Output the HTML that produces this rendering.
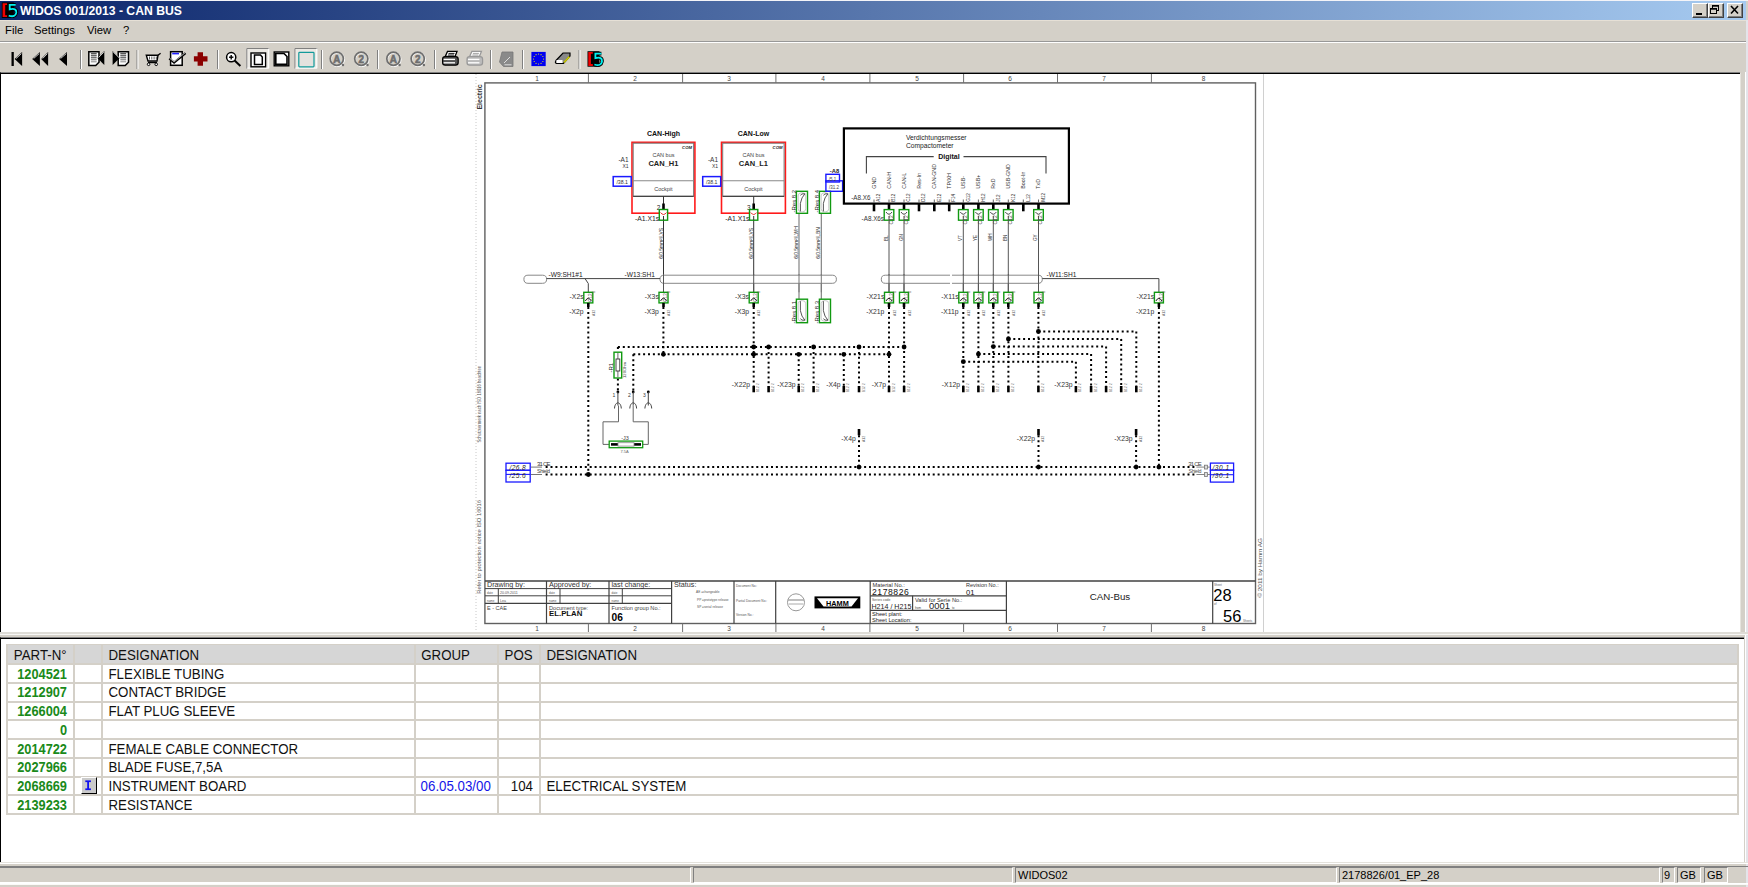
<!DOCTYPE html>
<html><head><meta charset="utf-8">
<style>
*{margin:0;padding:0;box-sizing:border-box}
html,body{width:1748px;height:887px;overflow:hidden;background:#d4d0c8;font-family:"Liberation Sans",sans-serif;position:relative}
.abs{position:absolute}
#title{left:0;top:1px;width:1746px;height:19px;background:linear-gradient(to right,#0a246a,#a6caf0)}
#topline{left:0;top:0;width:1748px;height:1px;background:#f4f4f8}
#ttext{left:20px;top:3.8px;color:#fff;font-weight:bold;font-size:12.2px;white-space:nowrap}
.wbtn{top:3px;height:15px;width:16px;background:#d4d0c8;border-top:1px solid #fff;border-left:1px solid #fff;border-right:1px solid #404040;border-bottom:1px solid #404040;box-shadow:inset -1px -1px 0 #808080}
#menu span{position:absolute;top:24px;font-size:11.3px;color:#000;white-space:nowrap}
#drawpanel{left:0;top:72px;width:1740px;height:560px;background:#fff;border-top:1px solid #808080;border-left:1px solid #000}
#drawpanel:before{content:"";position:absolute;left:0;top:0;right:0;height:1px;background:#000}
#tablepanel{left:0;top:637px;width:1744px;height:226px;background:#fff;border-top:1px solid #808080;border-left:1px solid #000}
#tablepanel:before{content:"";position:absolute;left:0;top:0;right:0;height:1px;background:#000}
.sp{position:absolute;top:867px;height:16px;border-top:1px solid #808080;border-left:1px solid #808080;border-bottom:1px solid #fff;border-right:1px solid #fff;font-size:11px;line-height:14px;padding-left:2px;white-space:nowrap;color:#000}
.hl{position:absolute;height:2px;background:#d4d0c8}
.vl{position:absolute;width:2px;background:#d4d0c8}
.tx{position:absolute;font-size:13.3px;line-height:16px;white-space:nowrap;color:#111;transform:translateY(0.6px) scaleY(1.17);transform-origin:0 55%}
.pn{position:absolute;font-size:12.8px;line-height:16px;white-space:nowrap;color:#1a8a1a;font-weight:bold;text-align:right;width:60px;left:7px;transform:translateY(0.7px) scaleY(1.18);transform-origin:0 55%}
svg text{font-family:"Liberation Sans",sans-serif}
.d{stroke:#000;stroke-width:2;stroke-dasharray:2 2.9}
</style></head><body>
<div id="topline" class="abs"></div>
<div id="title" class="abs"></div>
<div id="ttext" class="abs">WIDOS 001/2013 - CAN BUS</div>
<svg class="abs" style="left:0;top:0" width="20" height="20"><path d="M1.8,2.4 H13.8 V17.9 H1.8 Z" fill="#000"/>
<path d="M2.6,3.2 H7.1 V5 H5.2 V15.2 H7.1 V17.1 H2.6 Z" fill="#f00000"/>
<path d="M15.7,4.8 H9.7 V9.4 Q16.8,7.6 16.3,12.7 Q15.5,17.7 8.7,15.7" fill="none" stroke="#000" stroke-width="3.6"/>
<path d="M15.7,4.8 H9.7 V9.4 Q16.8,7.6 16.3,12.7 Q15.5,17.7 8.7,15.7" fill="none" stroke="#00f0f0" stroke-width="1.8"/></svg>
<div class="abs wbtn" style="left:1692px"></div>
<div class="abs wbtn" style="left:1708px"></div>
<div class="abs wbtn" style="left:1727px"></div>
<svg class="abs" style="left:1692px;top:3px" width="52" height="15">
<rect x="4" y="10" width="6" height="2" fill="#000"/>
<rect x="20.5" y="2.5" width="6" height="5" fill="none" stroke="#000" stroke-width="1"/><rect x="20.5" y="2.5" width="6" height="1.2" fill="#000"/>
<rect x="18.5" y="5.5" width="6" height="5" fill="#d4d0c8" stroke="#000" stroke-width="1"/><rect x="18.5" y="5.5" width="6" height="1.2" fill="#000"/>
<path d="M39,3 L46,10.5 M46,3 L39,10.5" stroke="#000" stroke-width="1.6"/>
</svg>
<div id="menu">
<span style="left:5px">File</span><span style="left:34px">Settings</span><span style="left:87px">View</span><span style="left:123px">?</span>
</div>
<div class="abs" style="left:0;top:41px;width:1748px;height:1px;background:#989898"></div>
<div class="abs" style="left:0;top:42px;width:1748px;height:1px;background:#fff"></div>
<div class="abs" style="left:0;top:20px;width:1748px;height:1px;background:#e6e0d6"></div>
<svg class="abs" style="left:0;top:0" width="620" height="72"><rect x="80" y="50" width="1" height="19" fill="#808080"/><rect x="81" y="50" width="1" height="19" fill="#fff"/>
<rect x="136.5" y="50" width="1" height="19" fill="#808080"/><rect x="137.5" y="50" width="1" height="19" fill="#fff"/>
<rect x="217" y="50" width="1" height="19" fill="#808080"/><rect x="218" y="50" width="1" height="19" fill="#fff"/>
<rect x="321" y="50" width="1" height="19" fill="#808080"/><rect x="322" y="50" width="1" height="19" fill="#fff"/>
<rect x="377" y="50" width="1" height="19" fill="#808080"/><rect x="378" y="50" width="1" height="19" fill="#fff"/>
<rect x="434" y="50" width="1" height="19" fill="#808080"/><rect x="435" y="50" width="1" height="19" fill="#fff"/>
<rect x="490" y="50" width="1" height="19" fill="#808080"/><rect x="491" y="50" width="1" height="19" fill="#fff"/>
<rect x="522" y="50" width="1" height="19" fill="#808080"/><rect x="523" y="50" width="1" height="19" fill="#fff"/>
<rect x="578.5" y="50" width="1" height="19" fill="#808080"/><rect x="579.5" y="50" width="1" height="19" fill="#fff"/>
<rect x="11.5" y="52" width="2.3" height="14" fill="#000"/>
<polygon points="14.6,59 22.1,52 22.1,66" fill="#000"/>
<line x1="16.1" y1="58.5" x2="21.4" y2="53.6" stroke="#fff" stroke-width="0.8"/>
<polygon points="32.2,59 39.9,52 39.9,66" fill="#000"/>
<line x1="33.7" y1="58.5" x2="39.2" y2="53.6" stroke="#fff" stroke-width="0.8"/>
<polygon points="41.2,59 48.1,52 48.1,66" fill="#000"/>
<line x1="42.7" y1="58.5" x2="47.4" y2="53.6" stroke="#fff" stroke-width="0.8"/>
<polygon points="59.1,59 67,52 67,66" fill="#000"/>
<line x1="60.6" y1="58.5" x2="66.3" y2="53.6" stroke="#fff" stroke-width="0.8"/>
<path d="M88.8,51.8 H99 V62.3 L95.7,65.5 H88.8 Z" fill="#fff" stroke="#000" stroke-width="1.5" stroke-linejoin="miter"/>
<line x1="90.9" y1="53.8" x2="96.7" y2="53.8" stroke="#111" stroke-width="1"/>
<line x1="90.9" y1="55.8" x2="96.7" y2="55.8" stroke="#222" stroke-width="1"/>
<line x1="90.9" y1="57.8" x2="96.7" y2="57.8" stroke="#333" stroke-width="1"/>
<line x1="90.9" y1="59.8" x2="96.7" y2="59.8" stroke="#666" stroke-width="1"/>
<line x1="90.9" y1="61.8" x2="96.7" y2="61.8" stroke="#888" stroke-width="1"/>
<polygon points="97.4,58 104.3,51.1 104.3,65" fill="#000"/><line x1="98.6" y1="57.5" x2="103.8" y2="52.2" stroke="#fff" stroke-width="0.8"/>
<path d="M118.2,51.8 H128.5 V62.3 L125.2,65.5 H118.2 Z" fill="#fff" stroke="#000" stroke-width="1.5" stroke-linejoin="miter"/>
<line x1="120.3" y1="53.8" x2="126.2" y2="53.8" stroke="#111" stroke-width="1"/>
<line x1="120.3" y1="55.8" x2="126.2" y2="55.8" stroke="#222" stroke-width="1"/>
<line x1="120.3" y1="57.8" x2="126.2" y2="57.8" stroke="#333" stroke-width="1"/>
<line x1="120.3" y1="59.8" x2="126.2" y2="59.8" stroke="#666" stroke-width="1"/>
<line x1="120.3" y1="61.8" x2="126.2" y2="61.8" stroke="#888" stroke-width="1"/>
<polygon points="119.7,58 112.6,51.1 112.6,65" fill="#000"/><line x1="113.2" y1="52" x2="119" y2="57.6" stroke="#fff" stroke-width="0.8"/>
<path d="M146.3,55.3 H158 L157,61 H148 Z" fill="#fff" stroke="#000" stroke-width="1.4"/>
<line x1="149.5" y1="56.5" x2="149.5" y2="59.5" stroke="#333" stroke-width="0.8"/>
<line x1="151.8" y1="56.5" x2="151.8" y2="59.5" stroke="#333" stroke-width="0.8"/>
<line x1="154.1" y1="56.5" x2="154.1" y2="59.5" stroke="#333" stroke-width="0.8"/>
<line x1="156.3" y1="56.5" x2="156.3" y2="59.5" stroke="#333" stroke-width="0.8"/>
<path d="M158,55.3 L160.6,53.3" stroke="#000" stroke-width="1.3"/><path d="M148,62.5 H157" stroke="#000" stroke-width="1.4"/><circle cx="148.6" cy="64.3" r="1.3" fill="#fff" stroke="#000" stroke-width="1"/><circle cx="156.2" cy="64.3" r="1.3" fill="#fff" stroke="#000" stroke-width="1"/>
<rect x="170.6" y="51.7" width="11.6" height="13.6" fill="#fff" stroke="#000" stroke-width="1.5"/><rect x="172.2" y="52.8" width="6.8" height="1.6" fill="#2020ff"/><polyline points="169.3,58.5 174.1,62.6 185.5,53.2" fill="none" stroke="#000" stroke-width="2.2"/><polyline points="169.6,58.2 174.1,61.8 185.2,52.7" fill="none" stroke="#ddd" stroke-width="0.8"/>
<path d="M197.6,52.2 H203 V56.3 H207.5 V61.6 H203 V65.8 H197.6 V61.6 H193.9 V56.3 H197.6 Z" fill="#8b0000"/>
<circle cx="231.2" cy="57.2" r="4.6" fill="#fff" stroke="#000" stroke-width="1.5"/><line x1="229" y1="57.2" x2="233.4" y2="57.2" stroke="#000" stroke-width="1.4"/><line x1="231.2" y1="55" x2="231.2" y2="59.4" stroke="#000" stroke-width="1.4"/><line x1="234.6" y1="60.6" x2="240.4" y2="66" stroke="#000" stroke-width="2"/>
<rect x="246.3" y="48" width="22.9" height="20.6" fill="#ebe9e4"/><path d="M246.8,68.6 V48.5 H269.2" stroke="#808080" stroke-width="1" fill="none"/><path d="M247.3,68.1 H268.7 V48.5" stroke="#fff" stroke-width="1" fill="none"/>
<rect x="294.4" y="48" width="22.9" height="20.6" fill="#ebe9e4"/><path d="M294.9,68.6 V48.5 H317.3" stroke="#808080" stroke-width="1" fill="none"/><path d="M295.4,68.1 H316.8 V48.5" stroke="#fff" stroke-width="1" fill="none"/>
<rect x="251" y="53" width="14.6" height="13.8" fill="#fff" stroke="#000" stroke-width="1.4"/><path d="M254.5,55 H260.5 L262.3,57 V64.5 H254.5 Z" fill="#fff" stroke="#000" stroke-width="1.5"/>
<rect x="274.2" y="52" width="14.6" height="13.8" fill="#fff" stroke="#000" stroke-width="1.4"/><path d="M275.8,53.5 H284 L287,56.5 V64.4 H275.8 Z" fill="#fff" stroke="#000" stroke-width="1.6"/>
<rect x="298.8" y="52.4" width="15.2" height="14.4" rx="0.8" fill="#e4e2de" stroke="#129a9a" stroke-width="1.2"/>
<circle cx="337.4" cy="59.4" r="6.8" fill="none" stroke="#fff" stroke-width="1.6"/><circle cx="336.8" cy="58.8" r="6.6" fill="none" stroke="#6e6e6e" stroke-width="1.7"/><circle cx="343" cy="65" r="1.2" fill="#6e6e6e"/>
<text x="337.3" y="63.3" font-size="10.5" font-weight="bold" text-anchor="middle" fill="#fff">A</text><text x="336.8" y="62.8" font-size="10" font-weight="bold" text-anchor="middle" fill="#6e6e6e" stroke="#6e6e6e" stroke-width="0.7">A</text>
<circle cx="361.9" cy="59.4" r="6.8" fill="none" stroke="#fff" stroke-width="1.6"/><circle cx="361.3" cy="58.8" r="6.6" fill="none" stroke="#6e6e6e" stroke-width="1.7"/><circle cx="367.5" cy="65" r="1.2" fill="#6e6e6e"/>
<text x="361.8" y="63.3" font-size="10.5" font-weight="bold" text-anchor="middle" fill="#fff">2</text><text x="361.3" y="62.8" font-size="10" font-weight="bold" text-anchor="middle" fill="#6e6e6e" stroke="#6e6e6e" stroke-width="0.7">2</text>
<circle cx="394" cy="59.4" r="6.8" fill="none" stroke="#fff" stroke-width="1.6"/><circle cx="393.4" cy="58.8" r="6.6" fill="none" stroke="#6e6e6e" stroke-width="1.7"/><circle cx="399.6" cy="65" r="1.2" fill="#6e6e6e"/>
<text x="393.9" y="63.3" font-size="10.5" font-weight="bold" text-anchor="middle" fill="#fff">A</text><text x="393.4" y="62.8" font-size="10" font-weight="bold" text-anchor="middle" fill="#6e6e6e" stroke="#6e6e6e" stroke-width="0.7">A</text>
<circle cx="418.3" cy="59.4" r="6.8" fill="none" stroke="#fff" stroke-width="1.6"/><circle cx="417.7" cy="58.8" r="6.6" fill="none" stroke="#6e6e6e" stroke-width="1.7"/><circle cx="423.9" cy="65" r="1.2" fill="#6e6e6e"/>
<text x="418.2" y="63.3" font-size="10.5" font-weight="bold" text-anchor="middle" fill="#fff">2</text><text x="417.7" y="62.8" font-size="10" font-weight="bold" text-anchor="middle" fill="#6e6e6e" stroke="#6e6e6e" stroke-width="0.7">2</text>
<path d="M445.2,56.5 L447.5,51.4 H457 L455,56.5 Z" fill="#fff" stroke="#000" stroke-width="1.3"/>
<line x1="448.5" y1="53.4" x2="454.5" y2="53.4" stroke="#000" stroke-width="0.9"/><line x1="448" y1="55" x2="454" y2="55" stroke="#000" stroke-width="0.9"/>
<rect x="442.6" y="56.6" width="15.6" height="8.6" rx="2.6" fill="#555" stroke="#000" stroke-width="1.2"/>
<line x1="443.6" y1="59.4" x2="455" y2="59.4" stroke="#fff" stroke-width="1.3"/><line x1="443.6" y1="62.8" x2="455" y2="62.8" stroke="#fff" stroke-width="1.3"/>
<path d="M469.6,56.5 L471.9,51.4 H481.4 L479.4,56.5 Z" fill="#fff" stroke="#999" stroke-width="1.3"/>
<line x1="472.9" y1="53.4" x2="478.9" y2="53.4" stroke="#999" stroke-width="0.9"/><line x1="472.4" y1="55" x2="478.4" y2="55" stroke="#999" stroke-width="0.9"/>
<rect x="467" y="56.6" width="15.6" height="8.6" rx="2.6" fill="#bbb" stroke="#999" stroke-width="1.2"/>
<line x1="468" y1="59.4" x2="479.4" y2="59.4" stroke="#fff" stroke-width="1.3"/><line x1="468" y1="62.8" x2="479.4" y2="62.8" stroke="#fff" stroke-width="1.3"/>
<path d="M502,52 H513 V66.5 H503.5 L499.5,62 Z" fill="#8a8a8a" stroke="#777" stroke-width="0.8"/><path d="M504,63 L510,57 M504.5,64.8 H511.5" stroke="#ddd" stroke-width="1"/>
<rect x="531.4" y="51.9" width="14.3" height="14.2" fill="#0000f0"/>
<circle cx="543.55" cy="59" r="0.6" fill="#ee0"/>
<circle cx="542.88" cy="61.5" r="0.6" fill="#ee0"/>
<circle cx="541.05" cy="63.33" r="0.6" fill="#ee0"/>
<circle cx="538.55" cy="64" r="0.6" fill="#ee0"/>
<circle cx="536.05" cy="63.33" r="0.6" fill="#ee0"/>
<circle cx="534.22" cy="61.5" r="0.6" fill="#ee0"/>
<circle cx="533.55" cy="59" r="0.6" fill="#ee0"/>
<circle cx="534.22" cy="56.5" r="0.6" fill="#ee0"/>
<circle cx="536.05" cy="54.67" r="0.6" fill="#ee0"/>
<circle cx="538.55" cy="54" r="0.6" fill="#ee0"/>
<circle cx="541.05" cy="54.67" r="0.6" fill="#ee0"/>
<circle cx="542.88" cy="56.5" r="0.6" fill="#ee0"/>
<path d="M556,60.5 L563,53 H570 V56 L563.5,63.5 H557.5 Q555.4,63.5 555.4,62 Z" fill="#888" stroke="#000" stroke-width="1.2"/><rect x="556.5" y="60" width="6" height="3" fill="#fff"/><path d="M564,62.5 L569.4,56.6" stroke="#cc0" stroke-width="1.6"/>
<path d="M587.5,51.2 H599.5 V66.7 H587.5 Z" fill="#000"/>
<path d="M588.3,52 H592.8 V53.8 H590.9 V64 H592.8 V65.9 H588.3 Z" fill="#f00000"/>
<path d="M601.4,53.6 H595.4 V58.2 Q602.5,56.4 602,61.5 Q601.2,66.5 594.4,64.5" fill="none" stroke="#000" stroke-width="3.6"/>
<path d="M601.4,53.6 H595.4 V58.2 Q602.5,56.4 602,61.5 Q601.2,66.5 594.4,64.5" fill="none" stroke="#00f0f0" stroke-width="1.8"/></svg>

<div id="drawpanel" class="abs"></div>
<div class="abs" style="left:1740px;top:73px;width:1px;height:559px;background:#e6e4de"></div>
<div class="abs" style="left:1745px;top:72px;width:1px;height:791px;background:#fff"></div>
<div class="abs" style="left:1746px;top:20px;width:2px;height:867px;background:#e4e4ea"></div>
<div class="abs" style="left:0;top:632px;width:1748px;height:2px;background:#dedcd6"></div>
<div class="abs" style="left:0;top:634px;width:1748px;height:1px;background:#f6f6f4"></div>
<svg class="abs" style="left:0;top:0" width="1748" height="640">
<line x1="476" y1="74" x2="476" y2="632" stroke="#c8c8c8" stroke-width="1" stroke-dasharray="1 2"/>
<line x1="1263.5" y1="74" x2="1263.5" y2="632" stroke="#d0d0d0" stroke-width="1" />
<rect x="484.9" y="82.9" width="770.6" height="540.6" stroke="#606060" stroke-width="1.4" fill="none" />
<line x1="588.4" y1="74" x2="588.4" y2="83" stroke="#707070" stroke-width="1" />
<line x1="588.4" y1="623.5" x2="588.4" y2="632" stroke="#707070" stroke-width="1" />
<line x1="682.6" y1="74" x2="682.6" y2="83" stroke="#707070" stroke-width="1" />
<line x1="682.6" y1="623.5" x2="682.6" y2="632" stroke="#707070" stroke-width="1" />
<line x1="775.9" y1="74" x2="775.9" y2="83" stroke="#707070" stroke-width="1" />
<line x1="775.9" y1="623.5" x2="775.9" y2="632" stroke="#707070" stroke-width="1" />
<line x1="869.9" y1="74" x2="869.9" y2="83" stroke="#707070" stroke-width="1" />
<line x1="869.9" y1="623.5" x2="869.9" y2="632" stroke="#707070" stroke-width="1" />
<line x1="963.6" y1="74" x2="963.6" y2="83" stroke="#707070" stroke-width="1" />
<line x1="963.6" y1="623.5" x2="963.6" y2="632" stroke="#707070" stroke-width="1" />
<line x1="1057.5" y1="74" x2="1057.5" y2="83" stroke="#707070" stroke-width="1" />
<line x1="1057.5" y1="623.5" x2="1057.5" y2="632" stroke="#707070" stroke-width="1" />
<line x1="1151.4" y1="74" x2="1151.4" y2="83" stroke="#707070" stroke-width="1" />
<line x1="1151.4" y1="623.5" x2="1151.4" y2="632" stroke="#707070" stroke-width="1" />
<text x="537" y="81" font-size="6.5" text-anchor="middle" font-weight="normal" fill="#444" >1</text>
<text x="537" y="630.5" font-size="6.5" text-anchor="middle" font-weight="normal" fill="#444" >1</text>
<text x="635" y="81" font-size="6.5" text-anchor="middle" font-weight="normal" fill="#444" >2</text>
<text x="635" y="630.5" font-size="6.5" text-anchor="middle" font-weight="normal" fill="#444" >2</text>
<text x="729" y="81" font-size="6.5" text-anchor="middle" font-weight="normal" fill="#444" >3</text>
<text x="729" y="630.5" font-size="6.5" text-anchor="middle" font-weight="normal" fill="#444" >3</text>
<text x="823" y="81" font-size="6.5" text-anchor="middle" font-weight="normal" fill="#444" >4</text>
<text x="823" y="630.5" font-size="6.5" text-anchor="middle" font-weight="normal" fill="#444" >4</text>
<text x="917" y="81" font-size="6.5" text-anchor="middle" font-weight="normal" fill="#444" >5</text>
<text x="917" y="630.5" font-size="6.5" text-anchor="middle" font-weight="normal" fill="#444" >5</text>
<text x="1010" y="81" font-size="6.5" text-anchor="middle" font-weight="normal" fill="#444" >6</text>
<text x="1010" y="630.5" font-size="6.5" text-anchor="middle" font-weight="normal" fill="#444" >6</text>
<text x="1104" y="81" font-size="6.5" text-anchor="middle" font-weight="normal" fill="#444" >7</text>
<text x="1104" y="630.5" font-size="6.5" text-anchor="middle" font-weight="normal" fill="#444" >7</text>
<text x="1203.5" y="81" font-size="6.5" text-anchor="middle" font-weight="normal" fill="#444" >8</text>
<text x="1203.5" y="630.5" font-size="6.5" text-anchor="middle" font-weight="normal" fill="#444" >8</text>
<text x="482.3" y="109.6" font-size="7" text-anchor="start" font-weight="bold" fill="#333" transform="rotate(-90 482.3 109.6)" >Electric</text>
<text x="481.3" y="442.6" font-size="5.6" text-anchor="start" font-weight="normal" fill="#555" transform="rotate(-90 481.3 442.6)" textLength="76.6" lengthAdjust="spacingAndGlyphs">Schutzvermerk nach ISO 16016 beachten</text>
<text x="481.3" y="593.7" font-size="5.6" text-anchor="start" font-weight="normal" fill="#555" transform="rotate(-90 481.3 593.7)" textLength="93.7" lengthAdjust="spacingAndGlyphs">Refer to protection notice ISO 16016</text>
<text x="1261.8" y="597.6" font-size="5.6" text-anchor="start" font-weight="normal" fill="#555" transform="rotate(-90 1261.8 597.6)" textLength="59.6" lengthAdjust="spacingAndGlyphs">© 2011 by Hamm AG</text>
<line x1="485" y1="581" x2="1255.5" y2="581" stroke="#404040" stroke-width="1.4" />
<line x1="546.5" y1="581" x2="546.5" y2="623.5" stroke="#404040" stroke-width="1.2" />
<line x1="609" y1="581" x2="609" y2="623.5" stroke="#404040" stroke-width="1.2" />
<line x1="671.6" y1="581" x2="671.6" y2="623.5" stroke="#404040" stroke-width="1.2" />
<line x1="734" y1="581" x2="734" y2="623.5" stroke="#404040" stroke-width="1.2" />
<line x1="775.7" y1="581" x2="775.7" y2="623.5" stroke="#404040" stroke-width="1.2" />
<line x1="870.2" y1="581" x2="870.2" y2="623.5" stroke="#404040" stroke-width="1.2" />
<line x1="1006.4" y1="581" x2="1006.4" y2="623.5" stroke="#404040" stroke-width="1.2" />
<line x1="1212.7" y1="581" x2="1212.7" y2="623.5" stroke="#404040" stroke-width="1.2" />
<line x1="485" y1="588.6" x2="671.6" y2="588.6" stroke="#404040" stroke-width="1" />
<line x1="485" y1="595.8" x2="671.6" y2="595.8" stroke="#404040" stroke-width="1" />
<line x1="485" y1="603.4" x2="671.6" y2="603.4" stroke="#404040" stroke-width="1.3" />
<line x1="498.3" y1="588.6" x2="498.3" y2="603.4" stroke="#404040" stroke-width="1" />
<line x1="560" y1="588.6" x2="560" y2="603.4" stroke="#404040" stroke-width="1" />
<line x1="622.3" y1="588.6" x2="622.3" y2="603.4" stroke="#404040" stroke-width="1" />
<line x1="870.2" y1="595.8" x2="1006.4" y2="595.8" stroke="#404040" stroke-width="1.2" />
<line x1="870.2" y1="610.3" x2="1006.4" y2="610.3" stroke="#404040" stroke-width="1.2" />
<line x1="912.6" y1="595.8" x2="912.6" y2="610.3" stroke="#404040" stroke-width="1.2" />
<text x="487" y="587.3" font-size="7.2" text-anchor="start" font-weight="normal" fill="#333" >Drawing by:</text>
<text x="549" y="587.3" font-size="7.2" text-anchor="start" font-weight="normal" fill="#333" >Approved by:</text>
<text x="611.5" y="587.3" font-size="7.2" text-anchor="start" font-weight="normal" fill="#333" >last change:</text>
<text x="674" y="587.3" font-size="7.2" text-anchor="start" font-weight="normal" fill="#333" >Status:</text>
<text x="487" y="594" font-size="3" text-anchor="start" font-weight="normal" fill="#555" >date</text>
<text x="500" y="594" font-size="3.6" text-anchor="start" font-weight="normal" fill="#555" >20.09.2011</text>
<text x="487" y="601.5" font-size="3" text-anchor="start" font-weight="normal" fill="#555" >name</text>
<text x="500" y="601.5" font-size="3.6" text-anchor="start" font-weight="normal" fill="#555" >Lea</text>
<text x="549" y="594" font-size="3" text-anchor="start" font-weight="normal" fill="#555" >date</text>
<text x="549" y="601.5" font-size="3" text-anchor="start" font-weight="normal" fill="#555" >name</text>
<text x="611.5" y="594" font-size="3" text-anchor="start" font-weight="normal" fill="#555" >date</text>
<text x="611.5" y="601.5" font-size="3" text-anchor="start" font-weight="normal" fill="#555" >name</text>
<text x="487" y="610" font-size="5.5" text-anchor="start" font-weight="normal" fill="#444" >E - CAE</text>
<text x="549" y="609.5" font-size="5.6" text-anchor="start" font-weight="normal" fill="#444" >Document type:</text>
<text x="549" y="615.8" font-size="7.8" text-anchor="start" font-weight="bold" fill="#111" >EL.PLAN</text>
<text x="611.5" y="609.5" font-size="5.6" text-anchor="start" font-weight="normal" fill="#444" >Function group No.:</text>
<text x="611.5" y="620.5" font-size="10.2" text-anchor="start" font-weight="bold" fill="#000" >06</text>
<text x="696" y="593" font-size="3.2" text-anchor="start" font-weight="normal" fill="#555" >AE =changeable</text>
<text x="697" y="600.5" font-size="3.2" text-anchor="start" font-weight="normal" fill="#555" >PP =prototype release</text>
<text x="697" y="608" font-size="3.2" text-anchor="start" font-weight="normal" fill="#555" >SP =serial release</text>
<text x="736" y="586.5" font-size="3.2" text-anchor="start" font-weight="normal" fill="#555" >Document No.:</text>
<text x="736" y="601.5" font-size="3.2" text-anchor="start" font-weight="normal" fill="#555" >Partial Document No.:</text>
<text x="736" y="616" font-size="3.2" text-anchor="start" font-weight="normal" fill="#555" >Version No.:</text>
<circle cx="796" cy="602.3" r="8.5" fill="none" stroke="#999" stroke-width="1"/>
<line x1="788" y1="600" x2="804" y2="600" stroke="#aaa" stroke-width="1.5" />
<line x1="789" y1="604" x2="803" y2="604" stroke="#aaa" stroke-width="1" />
<rect x="814.5" y="596.4" width="45.8" height="12" stroke="none" stroke-width="0" fill="#000" />
<polygon points="817,598.3 858,598.3 851.5,606.6 823.5,606.6" fill="#fff"/>
<text x="837.4" y="605.6" font-size="7.3" text-anchor="middle" font-weight="bold" fill="#000" >HAMM</text>
<text x="872.5" y="587" font-size="5.7" text-anchor="start" font-weight="normal" fill="#333" >Material No.:</text>
<text x="872" y="594.5" font-size="8.6" text-anchor="start" font-weight="normal" fill="#111" letter-spacing="0.55">2178826</text>
<text x="966" y="587" font-size="5.5" text-anchor="start" font-weight="normal" fill="#333" >Revision No.:</text>
<text x="966" y="594.5" font-size="7.6" text-anchor="start" font-weight="normal" fill="#111" >01</text>
<text x="872" y="601" font-size="3.5" text-anchor="start" font-weight="normal" fill="#555" >Series code</text>
<text x="871.5" y="608.7" font-size="7.1" text-anchor="start" font-weight="normal" fill="#222" >H214 / H215</text>
<text x="915" y="601.5" font-size="5.7" text-anchor="start" font-weight="normal" fill="#333" >Valid for Serie No.:</text>
<text x="915" y="608.5" font-size="3" text-anchor="start" font-weight="normal" fill="#444" >from</text>
<text x="929" y="608.8" font-size="9.4" text-anchor="start" font-weight="normal" fill="#222" >0001</text>
<text x="952" y="608.5" font-size="3" text-anchor="start" font-weight="normal" fill="#444" >to</text>
<text x="872" y="616" font-size="5.7" text-anchor="start" font-weight="normal" fill="#222" >Sheet plant:</text>
<text x="872" y="622" font-size="5.7" text-anchor="start" font-weight="normal" fill="#222" >Sheet Location:</text>
<text x="1110" y="599.8" font-size="9.7" text-anchor="middle" font-weight="normal" fill="#222" >CAN-Bus</text>
<text x="1214" y="585.5" font-size="3" text-anchor="start" font-weight="normal" fill="#666" >Sheet</text>
<text x="1213.3" y="600.6" font-size="16.5" text-anchor="start" font-weight="normal" fill="#000" >28</text>
<text x="1214" y="605" font-size="3" text-anchor="start" font-weight="normal" fill="#666" >of</text>
<text x="1223" y="621.5" font-size="16.5" text-anchor="start" font-weight="normal" fill="#000" >56</text>
<text x="1243" y="621.5" font-size="3" text-anchor="start" font-weight="normal" fill="#666" >Sheets</text>
<text x="663.5" y="136" font-size="7" text-anchor="middle" font-weight="bold" fill="#111" >CAN-High</text>
<text x="753.5" y="136" font-size="7" text-anchor="middle" font-weight="bold" fill="#111" >CAN-Low</text>
<rect x="632" y="142.3" width="62.9" height="70.9" stroke="#ff1a1a" stroke-width="1.6" fill="none" />
<rect x="633.2" y="143.2" width="60.4" height="53.1" stroke="#777" stroke-width="1" fill="none" />
<line x1="633.2" y1="180.8" x2="693.6" y2="180.8" stroke="#888" stroke-width="1.1" />
<line x1="633.2" y1="196.3" x2="693.6" y2="196.3" stroke="#444" stroke-width="1.2" />
<text x="691.9" y="149" font-size="4.2" text-anchor="end" font-weight="bold" fill="#222" font-style="italic">COM</text>
<text x="663.45" y="156.5" font-size="5.5" text-anchor="middle" font-weight="normal" fill="#444" >CAN bus</text>
<text x="663.45" y="166" font-size="7.5" text-anchor="middle" font-weight="bold" fill="#222" >CAN_H1</text>
<text x="663.45" y="190.5" font-size="5.5" text-anchor="middle" font-weight="normal" fill="#444" >Cockpit</text>
<text x="628.5" y="162" font-size="6.5" text-anchor="end" font-weight="normal" fill="#333" >-A1</text>
<text x="628.5" y="168" font-size="5" text-anchor="end" font-weight="normal" fill="#333" >X1</text>
<rect x="613.2" y="176.6" width="18" height="9.6" stroke="#1a1aff" stroke-width="1.5" fill="#fff" />
<text x="622.2" y="184" font-size="5.2" text-anchor="middle" font-weight="normal" fill="#333" >/38.1</text>
<line x1="663.5" y1="196.3" x2="663.5" y2="292.5" stroke="#333" stroke-width="1" />
<line x1="663.5" y1="203.5" x2="663.5" y2="211.5" stroke="#000" stroke-width="2.6" />
<text x="660.3" y="209.8" font-size="6.5" text-anchor="end" font-weight="normal" fill="#222" >2</text>
<rect x="659.3" y="209.5" width="8.3" height="10.7" stroke="#119911" stroke-width="1.4" fill="#fff" />
<path d="M660.5,212.5 Q663.5,216.5 666.5,212.5" stroke="#e33" stroke-width="1" fill="none"/>
<line x1="663.5" y1="216" x2="663.5" y2="220.2" stroke="#333" stroke-width="1" />
<text x="659.2" y="221.2" font-size="6.8" text-anchor="end" font-weight="normal" fill="#222" >-A1.X1s</text>
<text x="662.6" y="258.8" font-size="4.9" text-anchor="start" font-weight="normal" fill="#222" transform="rotate(-90 662.6 258.8)" >6/0.5mm²/LVS</text>
<rect x="721.5" y="142.3" width="63.9" height="70.9" stroke="#ff1a1a" stroke-width="1.6" fill="none" />
<rect x="722.7" y="143.2" width="61.4" height="53.1" stroke="#777" stroke-width="1" fill="none" />
<line x1="722.7" y1="180.8" x2="784.1" y2="180.8" stroke="#888" stroke-width="1.1" />
<line x1="722.7" y1="196.3" x2="784.1" y2="196.3" stroke="#444" stroke-width="1.2" />
<text x="782.4" y="149" font-size="4.2" text-anchor="end" font-weight="bold" fill="#222" font-style="italic">COM</text>
<text x="753.45" y="156.5" font-size="5.5" text-anchor="middle" font-weight="normal" fill="#444" >CAN bus</text>
<text x="753.45" y="166" font-size="7.5" text-anchor="middle" font-weight="bold" fill="#222" >CAN_L1</text>
<text x="753.45" y="190.5" font-size="5.5" text-anchor="middle" font-weight="normal" fill="#444" >Cockpit</text>
<text x="718" y="162" font-size="6.5" text-anchor="end" font-weight="normal" fill="#333" >-A1</text>
<text x="718" y="168" font-size="5" text-anchor="end" font-weight="normal" fill="#333" >X1</text>
<rect x="702.7" y="176.6" width="18" height="9.6" stroke="#1a1aff" stroke-width="1.5" fill="#fff" />
<text x="711.7" y="184" font-size="5.2" text-anchor="middle" font-weight="normal" fill="#333" >/38.1</text>
<line x1="753.7" y1="196.3" x2="753.7" y2="292.5" stroke="#333" stroke-width="1" />
<line x1="753.7" y1="203.5" x2="753.7" y2="211.5" stroke="#000" stroke-width="2.6" />
<text x="750.5" y="209.8" font-size="6.5" text-anchor="end" font-weight="normal" fill="#222" >3</text>
<rect x="749.5" y="209.5" width="8.3" height="10.7" stroke="#119911" stroke-width="1.4" fill="#fff" />
<path d="M750.7,212.5 Q753.7,216.5 756.7,212.5" stroke="#e33" stroke-width="1" fill="none"/>
<line x1="753.7" y1="216" x2="753.7" y2="220.2" stroke="#333" stroke-width="1" />
<text x="749.4" y="221.2" font-size="6.8" text-anchor="end" font-weight="normal" fill="#222" >-A1.X1s</text>
<text x="752.8" y="258.8" font-size="4.9" text-anchor="start" font-weight="normal" fill="#222" transform="rotate(-90 752.8 258.8)" >6/0.5mm²/LVS</text>
<line x1="799" y1="213.3" x2="799" y2="299.2" stroke="#777" stroke-width="1.1" />
<line x1="821.3" y1="213.3" x2="821.3" y2="299.2" stroke="#777" stroke-width="1.1" />
<rect x="796.4" y="191.3" width="11.1" height="22" stroke="#119911" stroke-width="1.4" fill="#fff" />
<rect x="798.2" y="192.8" width="7.5" height="19" stroke="#bbb" stroke-width="0.8" fill="none" rx="3"/>
<path d="M800.4,211.3 L800.4,203.3 Q801.4,197.3 804.9,193.8 Q801.4,193.3 800.4,195.3" stroke="#444" stroke-width="0.9" fill="none"/>
<rect x="819.4" y="191.3" width="11.1" height="22" stroke="#119911" stroke-width="1.4" fill="#fff" />
<rect x="821.2" y="192.8" width="7.5" height="19" stroke="#bbb" stroke-width="0.8" fill="none" rx="3"/>
<path d="M823.4,211.3 L823.4,203.3 Q824.4,197.3 827.9,193.8 Q824.4,193.3 823.4,195.3" stroke="#444" stroke-width="0.9" fill="none"/>
<rect x="796.4" y="299.2" width="11.1" height="23.5" stroke="#119911" stroke-width="1.4" fill="#fff" />
<rect x="798.2" y="300.7" width="7.5" height="20.5" stroke="#bbb" stroke-width="0.8" fill="none" rx="3"/>
<path d="M800.4,301.2 L800.4,310.7 Q801.4,316.7 804.9,320.2 Q801.4,320.7 800.4,318.7" stroke="#444" stroke-width="0.9" fill="none"/>
<rect x="819.4" y="299.2" width="11.1" height="23.5" stroke="#119911" stroke-width="1.4" fill="#fff" />
<rect x="821.2" y="300.7" width="7.5" height="20.5" stroke="#bbb" stroke-width="0.8" fill="none" rx="3"/>
<path d="M823.4,301.2 L823.4,310.7 Q824.4,316.7 827.9,320.2 Q824.4,320.7 823.4,318.7" stroke="#444" stroke-width="0.9" fill="none"/>
<text x="796" y="212.5" font-size="6" text-anchor="start" font-weight="normal" fill="#222" transform="rotate(-90 796 212.5)" >-Res 8.2</text>
<text x="818.6" y="212.5" font-size="6" text-anchor="start" font-weight="normal" fill="#222" transform="rotate(-90 818.6 212.5)" >-Res 8.4</text>
<text x="796" y="323.5" font-size="6" text-anchor="start" font-weight="normal" fill="#222" transform="rotate(-90 796 323.5)" >-Res 8.1</text>
<text x="818.6" y="323.5" font-size="6" text-anchor="start" font-weight="normal" fill="#222" transform="rotate(-90 818.6 323.5)" >-Res 8.3</text>
<text x="798.1" y="258.8" font-size="4.9" text-anchor="start" font-weight="normal" fill="#222" transform="rotate(-90 798.1 258.8)" >6/0.5mm²/LWH</text>
<text x="820.4" y="258.8" font-size="4.9" text-anchor="start" font-weight="normal" fill="#222" transform="rotate(-90 820.4 258.8)" >6/0.5mm²/LBN</text>
<text x="834.5" y="172.5" font-size="5.8" text-anchor="middle" font-weight="bold" fill="#222" >-A8</text>
<rect x="825.9" y="174.3" width="13.6" height="7.7" stroke="#1a1aff" stroke-width="1.4" fill="#fff" />
<rect x="825.9" y="180.8" width="16.7" height="10.5" stroke="#1a1aff" stroke-width="1.4" fill="none" />
<text x="832.5" y="181" font-size="4.5" text-anchor="middle" font-weight="normal" fill="#444" >/5.1</text>
<text x="834" y="188.5" font-size="4.5" text-anchor="middle" font-weight="normal" fill="#444" >/31.2</text>
<rect x="843.9" y="128.4" width="225" height="75.2" stroke="#000" stroke-width="2.2" fill="none" />
<text x="906" y="139.6" font-size="6.7" text-anchor="start" font-weight="normal" fill="#222" >Verdichtungsmesser</text>
<text x="906" y="147.6" font-size="6.7" text-anchor="start" font-weight="normal" fill="#222" >Compactometer</text>
<polyline points="866.4,173.4 866.4,156.6 933.7,156.6" stroke="#444" stroke-width="1.1" fill="none" />
<polyline points="963.5,156.6 1046,156.6 1046,173.4" stroke="#444" stroke-width="1.1" fill="none" />
<text x="949" y="159.2" font-size="7" text-anchor="middle" font-weight="bold" fill="#111" >Digital</text>
<text x="876" y="188.7" font-size="5.3" text-anchor="start" font-weight="normal" fill="#333" transform="rotate(-90 876 188.7)" >GND</text>
<text x="880.3" y="201.8" font-size="4.6" text-anchor="start" font-weight="normal" fill="#333" transform="rotate(-90 880.3 201.8)" >A12</text>
<line x1="874" y1="199.5" x2="874" y2="203" stroke="#666" stroke-width="1" />
<line x1="874" y1="203.8" x2="874" y2="211.3" stroke="#000" stroke-width="2.6" />
<text x="891" y="188.7" font-size="5.3" text-anchor="start" font-weight="normal" fill="#333" transform="rotate(-90 891 188.7)" >CAN-H</text>
<text x="895.3" y="201.8" font-size="4.6" text-anchor="start" font-weight="normal" fill="#333" transform="rotate(-90 895.3 201.8)" >B12</text>
<line x1="889" y1="199.5" x2="889" y2="203" stroke="#666" stroke-width="1" />
<line x1="889" y1="203.8" x2="889" y2="211.3" stroke="#000" stroke-width="2.6" />
<text x="906" y="188.7" font-size="5.3" text-anchor="start" font-weight="normal" fill="#333" transform="rotate(-90 906 188.7)" >CAN-L</text>
<text x="910.3" y="201.8" font-size="4.6" text-anchor="start" font-weight="normal" fill="#333" transform="rotate(-90 910.3 201.8)" >C12</text>
<line x1="904" y1="199.5" x2="904" y2="203" stroke="#666" stroke-width="1" />
<line x1="904" y1="203.8" x2="904" y2="211.3" stroke="#000" stroke-width="2.6" />
<text x="921" y="188.7" font-size="5.3" text-anchor="start" font-weight="normal" fill="#333" transform="rotate(-90 921 188.7)" >Res-In</text>
<text x="925.3" y="201.8" font-size="4.6" text-anchor="start" font-weight="normal" fill="#333" transform="rotate(-90 925.3 201.8)" >D12</text>
<line x1="919" y1="199.5" x2="919" y2="203" stroke="#666" stroke-width="1" />
<line x1="919" y1="203.8" x2="919" y2="211.3" stroke="#000" stroke-width="2.6" />
<text x="936.3" y="188.7" font-size="5.3" text-anchor="start" font-weight="normal" fill="#333" transform="rotate(-90 936.3 188.7)" >CAN-GND</text>
<text x="940.6" y="201.8" font-size="4.6" text-anchor="start" font-weight="normal" fill="#333" transform="rotate(-90 940.6 201.8)" >E12</text>
<line x1="934.3" y1="199.5" x2="934.3" y2="203" stroke="#666" stroke-width="1" />
<line x1="934.3" y1="203.8" x2="934.3" y2="211.3" stroke="#000" stroke-width="2.6" />
<text x="951.2" y="188.7" font-size="5.3" text-anchor="start" font-weight="normal" fill="#333" transform="rotate(-90 951.2 188.7)" >TP/XH</text>
<text x="955.5" y="201.8" font-size="4.6" text-anchor="start" font-weight="normal" fill="#333" transform="rotate(-90 955.5 201.8)" >F14</text>
<line x1="949.2" y1="199.5" x2="949.2" y2="203" stroke="#666" stroke-width="1" />
<line x1="949.2" y1="203.8" x2="949.2" y2="211.3" stroke="#000" stroke-width="2.6" />
<text x="965.3" y="188.7" font-size="5.3" text-anchor="start" font-weight="normal" fill="#333" transform="rotate(-90 965.3 188.7)" >USB-</text>
<text x="969.6" y="201.8" font-size="4.6" text-anchor="start" font-weight="normal" fill="#333" transform="rotate(-90 969.6 201.8)" >G12</text>
<line x1="963.3" y1="199.5" x2="963.3" y2="203" stroke="#666" stroke-width="1" />
<line x1="963.3" y1="203.8" x2="963.3" y2="211.3" stroke="#000" stroke-width="2.6" />
<text x="980.4" y="188.7" font-size="5.3" text-anchor="start" font-weight="normal" fill="#333" transform="rotate(-90 980.4 188.7)" >USB+</text>
<text x="984.7" y="201.8" font-size="4.6" text-anchor="start" font-weight="normal" fill="#333" transform="rotate(-90 984.7 201.8)" >H12</text>
<line x1="978.4" y1="199.5" x2="978.4" y2="203" stroke="#666" stroke-width="1" />
<line x1="978.4" y1="203.8" x2="978.4" y2="211.3" stroke="#000" stroke-width="2.6" />
<text x="995.3" y="188.7" font-size="5.3" text-anchor="start" font-weight="normal" fill="#333" transform="rotate(-90 995.3 188.7)" >RxD</text>
<text x="999.6" y="201.8" font-size="4.6" text-anchor="start" font-weight="normal" fill="#333" transform="rotate(-90 999.6 201.8)" >J12</text>
<line x1="993.3" y1="199.5" x2="993.3" y2="203" stroke="#666" stroke-width="1" />
<line x1="993.3" y1="203.8" x2="993.3" y2="211.3" stroke="#000" stroke-width="2.6" />
<text x="1010.3" y="188.7" font-size="5.3" text-anchor="start" font-weight="normal" fill="#333" transform="rotate(-90 1010.3 188.7)" >USB-GND</text>
<text x="1014.6" y="201.8" font-size="4.6" text-anchor="start" font-weight="normal" fill="#333" transform="rotate(-90 1014.6 201.8)" >K12</text>
<line x1="1008.3" y1="199.5" x2="1008.3" y2="203" stroke="#666" stroke-width="1" />
<line x1="1008.3" y1="203.8" x2="1008.3" y2="211.3" stroke="#000" stroke-width="2.6" />
<text x="1025.3" y="188.7" font-size="5.3" text-anchor="start" font-weight="normal" fill="#333" transform="rotate(-90 1025.3 188.7)" >Boot-In</text>
<text x="1029.6" y="201.8" font-size="4.6" text-anchor="start" font-weight="normal" fill="#333" transform="rotate(-90 1029.6 201.8)" >L12</text>
<line x1="1023.3" y1="199.5" x2="1023.3" y2="203" stroke="#666" stroke-width="1" />
<line x1="1023.3" y1="203.8" x2="1023.3" y2="211.3" stroke="#000" stroke-width="2.6" />
<text x="1040.5" y="188.7" font-size="5.3" text-anchor="start" font-weight="normal" fill="#333" transform="rotate(-90 1040.5 188.7)" >TxD</text>
<text x="1044.8" y="201.8" font-size="4.6" text-anchor="start" font-weight="normal" fill="#333" transform="rotate(-90 1044.8 201.8)" >M12</text>
<line x1="1038.5" y1="199.5" x2="1038.5" y2="203" stroke="#666" stroke-width="1" />
<line x1="1038.5" y1="203.8" x2="1038.5" y2="211.3" stroke="#000" stroke-width="2.6" />
<text x="870.5" y="199.5" font-size="6.3" text-anchor="end" font-weight="normal" fill="#333" >-A8.X6</text>
<rect x="884.2" y="209.6" width="9.6" height="10.6" stroke="#119911" stroke-width="1.4" fill="#fff" />
<path d="M886,212 Q889,216.5 892,212" stroke="#333" stroke-width="0.9" fill="none"/>
<line x1="889" y1="216" x2="889" y2="292.3" stroke="#555" stroke-width="1" />
<text x="892.8" y="224.5" font-size="5" text-anchor="start" font-weight="normal" fill="#444" transform="rotate(-90 892.8 224.5)" >C12</text>
<rect x="899.2" y="209.6" width="9.6" height="10.6" stroke="#119911" stroke-width="1.4" fill="#fff" />
<path d="M901,212 Q904,216.5 907,212" stroke="#333" stroke-width="0.9" fill="none"/>
<line x1="904" y1="216" x2="904" y2="292.3" stroke="#555" stroke-width="1" />
<text x="907.8" y="224.5" font-size="5" text-anchor="start" font-weight="normal" fill="#444" transform="rotate(-90 907.8 224.5)" >C12</text>
<rect x="958.5" y="209.6" width="9.6" height="10.6" stroke="#119911" stroke-width="1.4" fill="#fff" />
<path d="M960.3,212 Q963.3,216.5 966.3,212" stroke="#333" stroke-width="0.9" fill="none"/>
<line x1="963.3" y1="216" x2="963.3" y2="292.3" stroke="#555" stroke-width="1" />
<text x="967.1" y="224.5" font-size="5" text-anchor="start" font-weight="normal" fill="#444" transform="rotate(-90 967.1 224.5)" >C12</text>
<rect x="973.6" y="209.6" width="9.6" height="10.6" stroke="#119911" stroke-width="1.4" fill="#fff" />
<path d="M975.4,212 Q978.4,216.5 981.4,212" stroke="#333" stroke-width="0.9" fill="none"/>
<line x1="978.4" y1="216" x2="978.4" y2="292.3" stroke="#555" stroke-width="1" />
<text x="982.2" y="224.5" font-size="5" text-anchor="start" font-weight="normal" fill="#444" transform="rotate(-90 982.2 224.5)" >C12</text>
<rect x="988.5" y="209.6" width="9.6" height="10.6" stroke="#119911" stroke-width="1.4" fill="#fff" />
<path d="M990.3,212 Q993.3,216.5 996.3,212" stroke="#333" stroke-width="0.9" fill="none"/>
<line x1="993.3" y1="216" x2="993.3" y2="292.3" stroke="#555" stroke-width="1" />
<text x="997.1" y="224.5" font-size="5" text-anchor="start" font-weight="normal" fill="#444" transform="rotate(-90 997.1 224.5)" >C12</text>
<rect x="1003.5" y="209.6" width="9.6" height="10.6" stroke="#119911" stroke-width="1.4" fill="#fff" />
<path d="M1005.3,212 Q1008.3,216.5 1011.3,212" stroke="#333" stroke-width="0.9" fill="none"/>
<line x1="1008.3" y1="216" x2="1008.3" y2="292.3" stroke="#555" stroke-width="1" />
<text x="1012.1" y="224.5" font-size="5" text-anchor="start" font-weight="normal" fill="#444" transform="rotate(-90 1012.1 224.5)" >C12</text>
<rect x="1033.7" y="209.6" width="9.6" height="10.6" stroke="#119911" stroke-width="1.4" fill="#fff" />
<path d="M1035.5,212 Q1038.5,216.5 1041.5,212" stroke="#333" stroke-width="0.9" fill="none"/>
<line x1="1038.5" y1="216" x2="1038.5" y2="292.3" stroke="#555" stroke-width="1" />
<text x="1042.3" y="224.5" font-size="5" text-anchor="start" font-weight="normal" fill="#444" transform="rotate(-90 1042.3 224.5)" >C12</text>
<text x="884" y="221" font-size="6.3" text-anchor="end" font-weight="normal" fill="#333" >-A8.X6s</text>
<text x="887.8" y="241" font-size="4.6" text-anchor="start" font-weight="normal" fill="#333" transform="rotate(-90 887.8 241)" >BL</text>
<text x="902.8" y="241" font-size="4.6" text-anchor="start" font-weight="normal" fill="#333" transform="rotate(-90 902.8 241)" >GN</text>
<text x="962.1" y="241" font-size="4.6" text-anchor="start" font-weight="normal" fill="#333" transform="rotate(-90 962.1 241)" >VT</text>
<text x="977.2" y="241" font-size="4.6" text-anchor="start" font-weight="normal" fill="#333" transform="rotate(-90 977.2 241)" >YE</text>
<text x="992.1" y="241" font-size="4.6" text-anchor="start" font-weight="normal" fill="#333" transform="rotate(-90 992.1 241)" >WH</text>
<text x="1007.1" y="241" font-size="4.6" text-anchor="start" font-weight="normal" fill="#333" transform="rotate(-90 1007.1 241)" >BN</text>
<text x="1037.3" y="241" font-size="4.6" text-anchor="start" font-weight="normal" fill="#333" transform="rotate(-90 1037.3 241)" >GY</text>
<rect x="523.9" y="275.2" width="22.7" height="8.1" stroke="#888" stroke-width="1" fill="#fff" rx="4.05"/>
<rect x="660" y="275.2" width="176.4" height="8.1" stroke="#888" stroke-width="1" fill="#fff" rx="4.05"/>
<rect x="881.3" y="275.2" width="161" height="8.1" stroke="#888" stroke-width="1" fill="#fff" rx="4.05"/>
<rect x="950" y="274" width="2" height="11" stroke="none" stroke-width="0" fill="#fff" />
<polyline points="546.6,278.6 585,278.6 588.3,283.5 588.3,292.4" stroke="#444" stroke-width="1" fill="none" />
<line x1="585" y1="278.6" x2="660" y2="278.6" stroke="#444" stroke-width="1" />
<polyline points="1042.3,278.6 1158.9,278.6 1158.9,292.4" stroke="#444" stroke-width="1" fill="none" />
<text x="548.5" y="277" font-size="6.6" text-anchor="start" font-weight="normal" fill="#222" >-W9:SH1#1</text>
<text x="624.5" y="277" font-size="6.6" text-anchor="start" font-weight="normal" fill="#222" >-W13:SH1</text>
<text x="1046.5" y="277" font-size="6.6" text-anchor="start" font-weight="normal" fill="#222" >-W11:SH1</text>
<line x1="663.5" y1="274" x2="663.5" y2="292.3" stroke="#555" stroke-width="1" />
<line x1="753.7" y1="274" x2="753.7" y2="292.3" stroke="#555" stroke-width="1" />
<line x1="799" y1="274" x2="799" y2="292.3" stroke="#777" stroke-width="1" />
<line x1="821.3" y1="274" x2="821.3" y2="292.3" stroke="#777" stroke-width="1" />
<line x1="889" y1="274" x2="889" y2="292.3" stroke="#555" stroke-width="1" />
<line x1="904" y1="274" x2="904" y2="292.3" stroke="#555" stroke-width="1" />
<line x1="963.3" y1="274" x2="963.3" y2="292.3" stroke="#555" stroke-width="1" />
<line x1="978.4" y1="274" x2="978.4" y2="292.3" stroke="#555" stroke-width="1" />
<line x1="993.3" y1="274" x2="993.3" y2="292.3" stroke="#555" stroke-width="1" />
<line x1="1008.3" y1="274" x2="1008.3" y2="292.3" stroke="#555" stroke-width="1" />
<line x1="1038.5" y1="274" x2="1038.5" y2="292.3" stroke="#555" stroke-width="1" />
<rect x="583.8" y="292.3" width="9" height="10.6" stroke="#119911" stroke-width="1.4" fill="#fff" />
<path d="M585.3,301 Q588.3,295.5 591.3,301" stroke="#222" stroke-width="1" fill="none"/>
<line x1="588.3" y1="302.9" x2="588.3" y2="307" stroke="#000" stroke-width="2.6" />
<text x="594.8" y="293" font-size="3.5" text-anchor="start" font-weight="normal" fill="#555" transform="rotate(-90 594.8 293)" >1</text>
<text x="591.9" y="302" font-size="4.8" text-anchor="start" font-weight="normal" fill="#555" transform="rotate(-90 591.9 302)" >C12</text>
<text x="594.8" y="316" font-size="3.5" text-anchor="start" font-weight="normal" fill="#555" transform="rotate(-90 594.8 316)" >A12</text>
<rect x="659" y="292.3" width="9" height="10.6" stroke="#119911" stroke-width="1.4" fill="#fff" />
<path d="M660.5,301 Q663.5,295.5 666.5,301" stroke="#222" stroke-width="1" fill="none"/>
<line x1="663.5" y1="302.9" x2="663.5" y2="307" stroke="#000" stroke-width="2.6" />
<text x="670" y="293" font-size="3.5" text-anchor="start" font-weight="normal" fill="#555" transform="rotate(-90 670 293)" >1</text>
<text x="667.1" y="302" font-size="4.8" text-anchor="start" font-weight="normal" fill="#555" transform="rotate(-90 667.1 302)" >C12</text>
<text x="670" y="316" font-size="3.5" text-anchor="start" font-weight="normal" fill="#555" transform="rotate(-90 670 316)" >A12</text>
<rect x="749.2" y="292.3" width="9" height="10.6" stroke="#119911" stroke-width="1.4" fill="#fff" />
<path d="M750.7,301 Q753.7,295.5 756.7,301" stroke="#222" stroke-width="1" fill="none"/>
<line x1="753.7" y1="302.9" x2="753.7" y2="307" stroke="#000" stroke-width="2.6" />
<text x="760.2" y="293" font-size="3.5" text-anchor="start" font-weight="normal" fill="#555" transform="rotate(-90 760.2 293)" >1</text>
<text x="757.3" y="302" font-size="4.8" text-anchor="start" font-weight="normal" fill="#555" transform="rotate(-90 757.3 302)" >C12</text>
<text x="760.2" y="316" font-size="3.5" text-anchor="start" font-weight="normal" fill="#555" transform="rotate(-90 760.2 316)" >A12</text>
<rect x="884.5" y="292.3" width="9" height="10.6" stroke="#119911" stroke-width="1.4" fill="#fff" />
<path d="M886,301 Q889,295.5 892,301" stroke="#222" stroke-width="1" fill="none"/>
<line x1="889" y1="302.9" x2="889" y2="307" stroke="#000" stroke-width="2.6" />
<text x="895.5" y="293" font-size="3.5" text-anchor="start" font-weight="normal" fill="#555" transform="rotate(-90 895.5 293)" >1</text>
<text x="892.6" y="302" font-size="4.8" text-anchor="start" font-weight="normal" fill="#555" transform="rotate(-90 892.6 302)" >C12</text>
<text x="895.5" y="316" font-size="3.5" text-anchor="start" font-weight="normal" fill="#555" transform="rotate(-90 895.5 316)" >A12</text>
<rect x="899.5" y="292.3" width="9" height="10.6" stroke="#119911" stroke-width="1.4" fill="#fff" />
<path d="M901,301 Q904,295.5 907,301" stroke="#222" stroke-width="1" fill="none"/>
<line x1="904" y1="302.9" x2="904" y2="307" stroke="#000" stroke-width="2.6" />
<text x="910.5" y="293" font-size="3.5" text-anchor="start" font-weight="normal" fill="#555" transform="rotate(-90 910.5 293)" >1</text>
<text x="907.6" y="302" font-size="4.8" text-anchor="start" font-weight="normal" fill="#555" transform="rotate(-90 907.6 302)" >C12</text>
<text x="910.5" y="316" font-size="3.5" text-anchor="start" font-weight="normal" fill="#555" transform="rotate(-90 910.5 316)" >A12</text>
<rect x="958.8" y="292.3" width="9" height="10.6" stroke="#119911" stroke-width="1.4" fill="#fff" />
<path d="M960.3,301 Q963.3,295.5 966.3,301" stroke="#222" stroke-width="1" fill="none"/>
<line x1="963.3" y1="302.9" x2="963.3" y2="307" stroke="#000" stroke-width="2.6" />
<text x="969.8" y="293" font-size="3.5" text-anchor="start" font-weight="normal" fill="#555" transform="rotate(-90 969.8 293)" >1</text>
<text x="966.9" y="302" font-size="4.8" text-anchor="start" font-weight="normal" fill="#555" transform="rotate(-90 966.9 302)" >C12</text>
<text x="969.8" y="316" font-size="3.5" text-anchor="start" font-weight="normal" fill="#555" transform="rotate(-90 969.8 316)" >A12</text>
<rect x="973.9" y="292.3" width="9" height="10.6" stroke="#119911" stroke-width="1.4" fill="#fff" />
<path d="M975.4,301 Q978.4,295.5 981.4,301" stroke="#222" stroke-width="1" fill="none"/>
<line x1="978.4" y1="302.9" x2="978.4" y2="307" stroke="#000" stroke-width="2.6" />
<text x="984.9" y="293" font-size="3.5" text-anchor="start" font-weight="normal" fill="#555" transform="rotate(-90 984.9 293)" >1</text>
<text x="982" y="302" font-size="4.8" text-anchor="start" font-weight="normal" fill="#555" transform="rotate(-90 982 302)" >C12</text>
<text x="984.9" y="316" font-size="3.5" text-anchor="start" font-weight="normal" fill="#555" transform="rotate(-90 984.9 316)" >A12</text>
<rect x="988.8" y="292.3" width="9" height="10.6" stroke="#119911" stroke-width="1.4" fill="#fff" />
<path d="M990.3,301 Q993.3,295.5 996.3,301" stroke="#222" stroke-width="1" fill="none"/>
<line x1="993.3" y1="302.9" x2="993.3" y2="307" stroke="#000" stroke-width="2.6" />
<text x="999.8" y="293" font-size="3.5" text-anchor="start" font-weight="normal" fill="#555" transform="rotate(-90 999.8 293)" >1</text>
<text x="996.9" y="302" font-size="4.8" text-anchor="start" font-weight="normal" fill="#555" transform="rotate(-90 996.9 302)" >C12</text>
<text x="999.8" y="316" font-size="3.5" text-anchor="start" font-weight="normal" fill="#555" transform="rotate(-90 999.8 316)" >A12</text>
<rect x="1003.8" y="292.3" width="9" height="10.6" stroke="#119911" stroke-width="1.4" fill="#fff" />
<path d="M1005.3,301 Q1008.3,295.5 1011.3,301" stroke="#222" stroke-width="1" fill="none"/>
<line x1="1008.3" y1="302.9" x2="1008.3" y2="307" stroke="#000" stroke-width="2.6" />
<text x="1014.8" y="293" font-size="3.5" text-anchor="start" font-weight="normal" fill="#555" transform="rotate(-90 1014.8 293)" >1</text>
<text x="1011.9" y="302" font-size="4.8" text-anchor="start" font-weight="normal" fill="#555" transform="rotate(-90 1011.9 302)" >C12</text>
<text x="1014.8" y="316" font-size="3.5" text-anchor="start" font-weight="normal" fill="#555" transform="rotate(-90 1014.8 316)" >A12</text>
<rect x="1034" y="292.3" width="9" height="10.6" stroke="#119911" stroke-width="1.4" fill="#fff" />
<path d="M1035.5,301 Q1038.5,295.5 1041.5,301" stroke="#222" stroke-width="1" fill="none"/>
<line x1="1038.5" y1="302.9" x2="1038.5" y2="307" stroke="#000" stroke-width="2.6" />
<text x="1045" y="293" font-size="3.5" text-anchor="start" font-weight="normal" fill="#555" transform="rotate(-90 1045 293)" >1</text>
<text x="1042.1" y="302" font-size="4.8" text-anchor="start" font-weight="normal" fill="#555" transform="rotate(-90 1042.1 302)" >C12</text>
<text x="1045" y="316" font-size="3.5" text-anchor="start" font-weight="normal" fill="#555" transform="rotate(-90 1045 316)" >A12</text>
<rect x="1154.4" y="292.3" width="9" height="10.6" stroke="#119911" stroke-width="1.4" fill="#fff" />
<path d="M1155.9,301 Q1158.9,295.5 1161.9,301" stroke="#222" stroke-width="1" fill="none"/>
<line x1="1158.9" y1="302.9" x2="1158.9" y2="307" stroke="#000" stroke-width="2.6" />
<text x="1165.4" y="293" font-size="3.5" text-anchor="start" font-weight="normal" fill="#555" transform="rotate(-90 1165.4 293)" >1</text>
<text x="1162.5" y="302" font-size="4.8" text-anchor="start" font-weight="normal" fill="#555" transform="rotate(-90 1162.5 302)" >C12</text>
<text x="1165.4" y="316" font-size="3.5" text-anchor="start" font-weight="normal" fill="#555" transform="rotate(-90 1165.4 316)" >A12</text>
<text x="583.6" y="299" font-size="6.8" text-anchor="end" font-weight="normal" fill="#333" >-X2s</text>
<text x="583.6" y="313.5" font-size="6.8" text-anchor="end" font-weight="normal" fill="#333" >-X2p</text>
<text x="658.8" y="299" font-size="6.8" text-anchor="end" font-weight="normal" fill="#333" >-X3s</text>
<text x="658.8" y="313.5" font-size="6.8" text-anchor="end" font-weight="normal" fill="#333" >-X3p</text>
<text x="749" y="299" font-size="6.8" text-anchor="end" font-weight="normal" fill="#333" >-X3s</text>
<text x="749" y="313.5" font-size="6.8" text-anchor="end" font-weight="normal" fill="#333" >-X3p</text>
<text x="884.3" y="299" font-size="6.8" text-anchor="end" font-weight="normal" fill="#333" >-X21s</text>
<text x="884.3" y="313.5" font-size="6.8" text-anchor="end" font-weight="normal" fill="#333" >-X21p</text>
<text x="958.6" y="299" font-size="6.8" text-anchor="end" font-weight="normal" fill="#333" >-X11s</text>
<text x="958.6" y="313.5" font-size="6.8" text-anchor="end" font-weight="normal" fill="#333" >-X11p</text>
<text x="1154.2" y="299" font-size="6.8" text-anchor="end" font-weight="normal" fill="#333" >-X21s</text>
<text x="1154.2" y="313.5" font-size="6.8" text-anchor="end" font-weight="normal" fill="#333" >-X21p</text>
<line x1="588.3" y1="307" x2="588.3" y2="474.3" class="d"/>
<line x1="663.4" y1="307" x2="663.4" y2="354.3" class="d"/>
<line x1="753.7" y1="307" x2="753.7" y2="386" class="d"/>
<line x1="889" y1="307" x2="889" y2="386" class="d"/>
<line x1="904.1" y1="307" x2="904.1" y2="386" class="d"/>
<line x1="963.3" y1="307" x2="963.3" y2="386" class="d"/>
<line x1="978.4" y1="307" x2="978.4" y2="386" class="d"/>
<line x1="993.3" y1="307" x2="993.3" y2="386" class="d"/>
<line x1="1008.4" y1="307" x2="1008.4" y2="386" class="d"/>
<line x1="1038.4" y1="307" x2="1038.4" y2="386" class="d"/>
<line x1="1158.9" y1="307" x2="1158.9" y2="467.2" class="d"/>
<line x1="617.9" y1="347" x2="904.1" y2="347" class="d"/>
<line x1="633.3" y1="354.3" x2="889" y2="354.3" class="d"/>
<line x1="617.9" y1="347" x2="617.9" y2="352.2" class="d"/>
<line x1="617.9" y1="378.5" x2="617.9" y2="392" class="d"/>
<line x1="633.3" y1="354.3" x2="633.3" y2="392" class="d"/>
<line x1="768.6" y1="347" x2="768.6" y2="386" class="d"/>
<line x1="813.6" y1="347" x2="813.6" y2="386" class="d"/>
<line x1="859" y1="347" x2="859" y2="386" class="d"/>
<line x1="798.7" y1="354.3" x2="798.7" y2="386" class="d"/>
<line x1="843.8" y1="354.3" x2="843.8" y2="386" class="d"/>
<line x1="1038.4" y1="331.5" x2="1136.3" y2="331.5" class="d"/>
<line x1="1136.3" y1="331.5" x2="1136.3" y2="386" class="d"/>
<line x1="1008.4" y1="339" x2="1121.2" y2="339" class="d"/>
<line x1="1121.2" y1="339" x2="1121.2" y2="386" class="d"/>
<line x1="993.3" y1="346.6" x2="1106.1" y2="346.6" class="d"/>
<line x1="1106.1" y1="346.6" x2="1106.1" y2="386" class="d"/>
<line x1="978.4" y1="354.1" x2="1091.1" y2="354.1" class="d"/>
<line x1="1091.1" y1="354.1" x2="1091.1" y2="386" class="d"/>
<line x1="963.3" y1="361.7" x2="1075.9" y2="361.7" class="d"/>
<line x1="1075.9" y1="361.7" x2="1075.9" y2="386" class="d"/>
<line x1="753.7" y1="386" x2="753.7" y2="392.3" stroke="#000" stroke-width="2.6" />
<text x="759.2" y="385" font-size="3.2" text-anchor="start" font-weight="normal" fill="#555" transform="rotate(-90 759.2 385)" >2</text>
<text x="759.2" y="392" font-size="3.2" text-anchor="start" font-weight="normal" fill="#555" transform="rotate(-90 759.2 392)" >B12</text>
<line x1="768.6" y1="386" x2="768.6" y2="392.3" stroke="#000" stroke-width="2.6" />
<text x="774.1" y="385" font-size="3.2" text-anchor="start" font-weight="normal" fill="#555" transform="rotate(-90 774.1 385)" >2</text>
<text x="774.1" y="392" font-size="3.2" text-anchor="start" font-weight="normal" fill="#555" transform="rotate(-90 774.1 392)" >B12</text>
<line x1="798.7" y1="386" x2="798.7" y2="392.3" stroke="#000" stroke-width="2.6" />
<text x="804.2" y="385" font-size="3.2" text-anchor="start" font-weight="normal" fill="#555" transform="rotate(-90 804.2 385)" >2</text>
<text x="804.2" y="392" font-size="3.2" text-anchor="start" font-weight="normal" fill="#555" transform="rotate(-90 804.2 392)" >B12</text>
<line x1="813.6" y1="386" x2="813.6" y2="392.3" stroke="#000" stroke-width="2.6" />
<text x="819.1" y="385" font-size="3.2" text-anchor="start" font-weight="normal" fill="#555" transform="rotate(-90 819.1 385)" >2</text>
<text x="819.1" y="392" font-size="3.2" text-anchor="start" font-weight="normal" fill="#555" transform="rotate(-90 819.1 392)" >B12</text>
<line x1="843.8" y1="386" x2="843.8" y2="392.3" stroke="#000" stroke-width="2.6" />
<text x="849.3" y="385" font-size="3.2" text-anchor="start" font-weight="normal" fill="#555" transform="rotate(-90 849.3 385)" >2</text>
<text x="849.3" y="392" font-size="3.2" text-anchor="start" font-weight="normal" fill="#555" transform="rotate(-90 849.3 392)" >B12</text>
<line x1="859" y1="386" x2="859" y2="392.3" stroke="#000" stroke-width="2.6" />
<text x="864.5" y="385" font-size="3.2" text-anchor="start" font-weight="normal" fill="#555" transform="rotate(-90 864.5 385)" >2</text>
<text x="864.5" y="392" font-size="3.2" text-anchor="start" font-weight="normal" fill="#555" transform="rotate(-90 864.5 392)" >B12</text>
<line x1="889" y1="386" x2="889" y2="392.3" stroke="#000" stroke-width="2.6" />
<text x="894.5" y="385" font-size="3.2" text-anchor="start" font-weight="normal" fill="#555" transform="rotate(-90 894.5 385)" >2</text>
<text x="894.5" y="392" font-size="3.2" text-anchor="start" font-weight="normal" fill="#555" transform="rotate(-90 894.5 392)" >B12</text>
<line x1="904.1" y1="386" x2="904.1" y2="392.3" stroke="#000" stroke-width="2.6" />
<text x="909.6" y="385" font-size="3.2" text-anchor="start" font-weight="normal" fill="#555" transform="rotate(-90 909.6 385)" >2</text>
<text x="909.6" y="392" font-size="3.2" text-anchor="start" font-weight="normal" fill="#555" transform="rotate(-90 909.6 392)" >B12</text>
<line x1="963.3" y1="386" x2="963.3" y2="392.3" stroke="#000" stroke-width="2.6" />
<text x="968.8" y="385" font-size="3.2" text-anchor="start" font-weight="normal" fill="#555" transform="rotate(-90 968.8 385)" >2</text>
<text x="968.8" y="392" font-size="3.2" text-anchor="start" font-weight="normal" fill="#555" transform="rotate(-90 968.8 392)" >B12</text>
<line x1="978.4" y1="386" x2="978.4" y2="392.3" stroke="#000" stroke-width="2.6" />
<text x="983.9" y="385" font-size="3.2" text-anchor="start" font-weight="normal" fill="#555" transform="rotate(-90 983.9 385)" >2</text>
<text x="983.9" y="392" font-size="3.2" text-anchor="start" font-weight="normal" fill="#555" transform="rotate(-90 983.9 392)" >B12</text>
<line x1="993.3" y1="386" x2="993.3" y2="392.3" stroke="#000" stroke-width="2.6" />
<text x="998.8" y="385" font-size="3.2" text-anchor="start" font-weight="normal" fill="#555" transform="rotate(-90 998.8 385)" >2</text>
<text x="998.8" y="392" font-size="3.2" text-anchor="start" font-weight="normal" fill="#555" transform="rotate(-90 998.8 392)" >B12</text>
<line x1="1008.4" y1="386" x2="1008.4" y2="392.3" stroke="#000" stroke-width="2.6" />
<text x="1013.9" y="385" font-size="3.2" text-anchor="start" font-weight="normal" fill="#555" transform="rotate(-90 1013.9 385)" >2</text>
<text x="1013.9" y="392" font-size="3.2" text-anchor="start" font-weight="normal" fill="#555" transform="rotate(-90 1013.9 392)" >B12</text>
<line x1="1038.4" y1="386" x2="1038.4" y2="392.3" stroke="#000" stroke-width="2.6" />
<text x="1043.9" y="385" font-size="3.2" text-anchor="start" font-weight="normal" fill="#555" transform="rotate(-90 1043.9 385)" >2</text>
<text x="1043.9" y="392" font-size="3.2" text-anchor="start" font-weight="normal" fill="#555" transform="rotate(-90 1043.9 392)" >B12</text>
<line x1="1075.9" y1="386" x2="1075.9" y2="392.3" stroke="#000" stroke-width="2.6" />
<text x="1081.4" y="385" font-size="3.2" text-anchor="start" font-weight="normal" fill="#555" transform="rotate(-90 1081.4 385)" >2</text>
<text x="1081.4" y="392" font-size="3.2" text-anchor="start" font-weight="normal" fill="#555" transform="rotate(-90 1081.4 392)" >B12</text>
<line x1="1091.1" y1="386" x2="1091.1" y2="392.3" stroke="#000" stroke-width="2.6" />
<text x="1096.6" y="385" font-size="3.2" text-anchor="start" font-weight="normal" fill="#555" transform="rotate(-90 1096.6 385)" >2</text>
<text x="1096.6" y="392" font-size="3.2" text-anchor="start" font-weight="normal" fill="#555" transform="rotate(-90 1096.6 392)" >B12</text>
<line x1="1106.1" y1="386" x2="1106.1" y2="392.3" stroke="#000" stroke-width="2.6" />
<text x="1111.6" y="385" font-size="3.2" text-anchor="start" font-weight="normal" fill="#555" transform="rotate(-90 1111.6 385)" >2</text>
<text x="1111.6" y="392" font-size="3.2" text-anchor="start" font-weight="normal" fill="#555" transform="rotate(-90 1111.6 392)" >B12</text>
<line x1="1121.2" y1="386" x2="1121.2" y2="392.3" stroke="#000" stroke-width="2.6" />
<text x="1126.7" y="385" font-size="3.2" text-anchor="start" font-weight="normal" fill="#555" transform="rotate(-90 1126.7 385)" >2</text>
<text x="1126.7" y="392" font-size="3.2" text-anchor="start" font-weight="normal" fill="#555" transform="rotate(-90 1126.7 392)" >B12</text>
<line x1="1136.3" y1="386" x2="1136.3" y2="392.3" stroke="#000" stroke-width="2.6" />
<text x="1141.8" y="385" font-size="3.2" text-anchor="start" font-weight="normal" fill="#555" transform="rotate(-90 1141.8 385)" >2</text>
<text x="1141.8" y="392" font-size="3.2" text-anchor="start" font-weight="normal" fill="#555" transform="rotate(-90 1141.8 392)" >B12</text>
<text x="750" y="386.5" font-size="6.8" text-anchor="end" font-weight="normal" fill="#333" >-X22p</text>
<text x="795.5" y="386.5" font-size="6.8" text-anchor="end" font-weight="normal" fill="#333" >-X23p</text>
<text x="840.5" y="386.5" font-size="6.8" text-anchor="end" font-weight="normal" fill="#333" >-X4p</text>
<text x="886" y="386.5" font-size="6.8" text-anchor="end" font-weight="normal" fill="#333" >-X7p</text>
<text x="960" y="386.5" font-size="6.8" text-anchor="end" font-weight="normal" fill="#333" >-X12p</text>
<text x="1072.5" y="386.5" font-size="6.8" text-anchor="end" font-weight="normal" fill="#333" >-X23p</text>
<circle cx="663.4" cy="354.3" r="2.4" fill="#000"/>
<circle cx="753.7" cy="347" r="2.4" fill="#000"/>
<circle cx="753.7" cy="354.3" r="2.4" fill="#000"/>
<circle cx="768.6" cy="347" r="2.4" fill="#000"/>
<circle cx="798.7" cy="354.3" r="2.4" fill="#000"/>
<circle cx="813.6" cy="347" r="2.4" fill="#000"/>
<circle cx="843.8" cy="354.3" r="2.4" fill="#000"/>
<circle cx="859" cy="347" r="2.4" fill="#000"/>
<circle cx="889" cy="354.3" r="2.4" fill="#000"/>
<circle cx="904.1" cy="347" r="2.4" fill="#000"/>
<circle cx="963.3" cy="361.7" r="2.4" fill="#000"/>
<circle cx="978.4" cy="354.1" r="2.4" fill="#000"/>
<circle cx="993.3" cy="346.6" r="2.4" fill="#000"/>
<circle cx="1008.4" cy="339" r="2.4" fill="#000"/>
<circle cx="1038.4" cy="331.5" r="2.4" fill="#000"/>
<rect x="614" y="352.2" width="7.7" height="25.8" stroke="#119911" stroke-width="1.4" fill="#fff" />
<line x1="617.9" y1="353" x2="617.9" y2="377" stroke="#444" stroke-width="0.8" />
<rect x="616" y="359" width="3.8" height="12" stroke="#333" stroke-width="0.9" fill="#fff" />
<text x="612.8" y="372.5" font-size="6" text-anchor="start" font-weight="normal" fill="#222" transform="rotate(-90 612.8 372.5)" >-R1</text>
<text x="625.8" y="378" font-size="4.2" text-anchor="start" font-weight="normal" fill="#444" transform="rotate(-90 625.8 378)" >120Ohm</text>
<circle cx="617.9" cy="392" r="1.4" fill="#000"/>
<line x1="617.9" y1="392" x2="617.9" y2="405.5" stroke="#444" stroke-width="1" />
<path d="M614.5,408.5 C614.7,404 616.9,402.8 617.9,402.8 C618.9,402.8 621.1,404 621.3,408.5" stroke="#444" stroke-width="1" fill="none"/>
<text x="615.4" y="396.5" font-size="5" text-anchor="end" font-weight="normal" fill="#333" >1</text>
<circle cx="633.2" cy="392" r="1.4" fill="#000"/>
<line x1="633.2" y1="392" x2="633.2" y2="405.5" stroke="#444" stroke-width="1" />
<path d="M629.8,408.5 C630,404 632.2,402.8 633.2,402.8 C634.2,402.8 636.4,404 636.6,408.5" stroke="#444" stroke-width="1" fill="none"/>
<text x="630.7" y="396.5" font-size="5" text-anchor="end" font-weight="normal" fill="#333" >2</text>
<circle cx="648.3" cy="392" r="1.4" fill="#000"/>
<line x1="648.3" y1="392" x2="648.3" y2="405.5" stroke="#444" stroke-width="1" />
<path d="M644.9,408.5 C645.1,404 647.3,402.8 648.3,402.8 C649.3,402.8 651.5,404 651.7,408.5" stroke="#444" stroke-width="1" fill="none"/>
<text x="645.8" y="396.5" font-size="5" text-anchor="end" font-weight="normal" fill="#333" >3</text>
<polyline points="618.5,405.5 618.5,421.8 603,421.8 603,444.4 609.2,444.4" stroke="#666" stroke-width="1" fill="none" />
<polyline points="633.2,405.5 633.2,421.8 648.3,421.8 648.3,444.4 642.7,444.4" stroke="#666" stroke-width="1" fill="none" />
<rect x="609.2" y="441.1" width="33.5" height="6.6" stroke="#119911" stroke-width="1.3" fill="#fff" />
<line x1="611" y1="444.4" x2="618" y2="444.4" stroke="#000" stroke-width="2.6" />
<line x1="634" y1="444.4" x2="641" y2="444.4" stroke="#000" stroke-width="2.6" />
<rect x="618" y="442.7" width="16" height="3.4" stroke="#888" stroke-width="0.8" fill="#fff" />
<text x="625" y="440.3" font-size="5.5" text-anchor="middle" font-weight="normal" fill="#444" >-J3</text>
<text x="624.5" y="452.5" font-size="4" text-anchor="middle" font-weight="normal" fill="#666" >7.5A</text>
<line x1="545.6" y1="467.1" x2="1196.4" y2="467.1" class="d"/>
<line x1="545.6" y1="474.5" x2="1196.4" y2="474.5" class="d"/>
<line x1="859" y1="429" x2="859" y2="435.3" stroke="#000" stroke-width="2.6" />
<line x1="859" y1="435.3" x2="859" y2="467.1" class="d"/>
<text x="864.5" y="442" font-size="3.5" text-anchor="start" font-weight="normal" fill="#555" transform="rotate(-90 864.5 442)" >A12</text>
<line x1="1038.5" y1="429" x2="1038.5" y2="435.3" stroke="#000" stroke-width="2.6" />
<line x1="1038.5" y1="435.3" x2="1038.5" y2="467.1" class="d"/>
<text x="1044" y="442" font-size="3.5" text-anchor="start" font-weight="normal" fill="#555" transform="rotate(-90 1044 442)" >A12</text>
<line x1="1136.1" y1="429" x2="1136.1" y2="435.3" stroke="#000" stroke-width="2.6" />
<line x1="1136.1" y1="435.3" x2="1136.1" y2="467.1" class="d"/>
<text x="1141.6" y="442" font-size="3.5" text-anchor="start" font-weight="normal" fill="#555" transform="rotate(-90 1141.6 442)" >A12</text>
<text x="855.7" y="441" font-size="6.8" text-anchor="end" font-weight="normal" fill="#333" >-X4p</text>
<text x="1035" y="441" font-size="6.8" text-anchor="end" font-weight="normal" fill="#333" >-X22p</text>
<text x="1132.5" y="441" font-size="6.8" text-anchor="end" font-weight="normal" fill="#333" >-X23p</text>
<circle cx="588.3" cy="474.5" r="2.4" fill="#000"/>
<circle cx="859" cy="467.1" r="2.4" fill="#000"/>
<circle cx="1038.5" cy="467.1" r="2.4" fill="#000"/>
<circle cx="1136.1" cy="467.1" r="2.4" fill="#000"/>
<circle cx="1158.9" cy="467.1" r="2.4" fill="#000"/>
<rect x="506" y="463.2" width="24.2" height="7.1" stroke="#1a1aff" stroke-width="1.3" fill="#fff" />
<rect x="506" y="470.3" width="24.2" height="11.7" stroke="#1a1aff" stroke-width="1.3" fill="#fff" />
<line x1="506" y1="474.4" x2="530.2" y2="474.4" stroke="#1a1aff" stroke-width="1.1" />
<text x="509.5" y="469.6" font-size="6.6" text-anchor="start" font-weight="normal" fill="#222" font-style="italic" letter-spacing="0.35">/26.8</text>
<text x="509.5" y="477.8" font-size="6.6" text-anchor="start" font-weight="normal" fill="#222" font-style="italic" letter-spacing="0.35">/25.6</text>
<line x1="531" y1="467.1" x2="542" y2="467.1" stroke="#666" stroke-width="0.9" />
<line x1="531" y1="474.5" x2="542" y2="474.5" stroke="#666" stroke-width="0.9" />
<text x="537" y="466.3" font-size="6" text-anchor="start" font-weight="normal" fill="#333" textLength="13.5">31 CE</text>
<text x="537" y="473.3" font-size="5.4" text-anchor="start" font-weight="normal" fill="#444" textLength="13">Shield</text>
<rect x="1210.4" y="463.1" width="23.2" height="7.1" stroke="#1a1aff" stroke-width="1.3" fill="#fff" />
<rect x="1210.4" y="470.2" width="23.2" height="11.9" stroke="#1a1aff" stroke-width="1.3" fill="#fff" />
<line x1="1210.4" y1="474.7" x2="1233.6" y2="474.7" stroke="#1a1aff" stroke-width="1.1" />
<text x="1212.5" y="469.6" font-size="6.6" text-anchor="start" font-weight="normal" fill="#222" font-style="italic" letter-spacing="0.5">/30.1</text>
<text x="1212.5" y="477.8" font-size="6.6" text-anchor="start" font-weight="normal" fill="#222" font-style="italic" letter-spacing="0.5">/30.1</text>
<line x1="1196.4" y1="467.1" x2="1210" y2="467.1" stroke="#777" stroke-width="0.9" />
<line x1="1196.4" y1="474.5" x2="1210" y2="474.5" stroke="#777" stroke-width="0.9" />
<rect x="1204.5" y="465.2" width="3" height="3.8" stroke="#777" stroke-width="0.8" fill="#ddd" />
<rect x="1204.5" y="472.6" width="3" height="3.8" stroke="#777" stroke-width="0.8" fill="#ddd" />
<text x="1188.3" y="466.3" font-size="6" text-anchor="start" font-weight="normal" fill="#444" textLength="13.5">31 CE</text>
<text x="1188.5" y="473.3" font-size="5.4" text-anchor="start" font-weight="normal" fill="#555" textLength="13">Shield</text>
</svg>

<div id="tablepanel" class="abs"></div>
<!-- table grid -->
<div class="abs" style="left:6px;top:644px;width:1732px;height:19px;background:#d6d6d6"></div>
<div class="hl" style="left:6px;top:643.5px;width:1732px;height:1.5px"></div>
<div class="hl" style="left:6px;top:663px;width:1732px"></div>
<div class="hl" style="left:6px;top:681.75px;width:1732px"></div>
<div class="hl" style="left:6px;top:700.5px;width:1732px"></div>
<div class="hl" style="left:6px;top:719.25px;width:1732px"></div>
<div class="hl" style="left:6px;top:738px;width:1732px"></div>
<div class="hl" style="left:6px;top:756.75px;width:1732px"></div>
<div class="hl" style="left:6px;top:775.5px;width:1732px"></div>
<div class="hl" style="left:6px;top:794.25px;width:1732px"></div>
<div class="hl" style="left:6px;top:813px;width:1732px"></div>
<div class="vl" style="left:6px;top:644px;height:171px;width:1.5px"></div>
<div class="vl" style="left:72.8px;top:644px;height:171px"></div>
<div class="vl" style="left:101px;top:644px;height:171px"></div>
<div class="vl" style="left:413.8px;top:644px;height:171px"></div>
<div class="vl" style="left:497px;top:644px;height:171px"></div>
<div class="vl" style="left:538.6px;top:644px;height:171px"></div>
<div class="vl" style="left:1736.5px;top:644px;height:171px"></div>

<div class="tx" style="left:13.8px;top:646.8px">PART-N°</div>
<div class="tx" style="left:108.5px;top:646.8px">DESIGNATION</div>
<div class="tx" style="left:421.2px;top:646.8px">GROUP</div>
<div class="tx" style="left:504.6px;top:646.8px">POS</div>
<div class="tx" style="left:546.4px;top:646.8px">DESIGNATION</div>

<div class="pn" style="top:665.5px">1204521</div><div class="tx" style="left:108.5px;top:665.5px">FLEXIBLE TUBING</div>
<div class="pn" style="top:684.25px">1212907</div><div class="tx" style="left:108.5px;top:684.25px">CONTACT BRIDGE</div>
<div class="pn" style="top:703px">1266004</div><div class="tx" style="left:108.5px;top:703px">FLAT PLUG SLEEVE</div>
<div class="pn" style="top:721.75px">0</div>
<div class="pn" style="top:740.5px">2014722</div><div class="tx" style="left:108.5px;top:740.5px">FEMALE CABLE CONNECTOR</div>
<div class="pn" style="top:759.25px">2027966</div><div class="tx" style="left:108.5px;top:759.25px">BLADE FUSE,7,5A</div>
<div class="pn" style="top:778px">2068669</div><div class="tx" style="left:108.5px;top:778px">INSTRUMENT BOARD</div>
<div class="tx" style="left:420.6px;top:778px;color:#1515e8">06.05.03/00</div>
<div class="tx" style="left:510px;top:778px;width:23px;text-align:right">104</div>
<div class="tx" style="left:546.4px;top:778px">ELECTRICAL SYSTEM</div>
<div class="pn" style="top:796.75px">2139233</div><div class="tx" style="left:108.5px;top:796.75px">RESISTANCE</div>
<div class="abs" style="left:80.5px;top:777px;width:16.5px;height:17px;background:#cacaca;border-top:1px solid #fff;border-left:1px solid #fff;border-right:1.5px solid #000;border-bottom:1.5px solid #000"></div>
<svg class="abs" style="left:0;top:0" width="120" height="800"><rect x="85.3" y="780.4" width="5.6" height="1.7" fill="#1010f0"/><rect x="87.2" y="781" width="1.8" height="8" fill="#1010f0"/><rect x="85.3" y="788.4" width="5.6" height="1.7" fill="#1010f0"/></svg>

<div class="abs" style="left:0;top:862px;width:1748px;height:1px;background:#e4e2dc"></div>
<div class="abs" style="left:0;top:863px;width:1748px;height:1px;background:#fff"></div>
<div class="abs" style="left:0;top:866px;width:1748px;height:1px;background:#808080"></div>
<div class="abs" style="left:0;top:883px;width:1748px;height:1px;background:#fff"></div>
<div class="sp" style="left:0;width:691px;border-left:none"></div>
<div class="abs" style="left:0;top:884px;width:1748px;height:1px;background:#fafaf8"></div>
<div class="sp" style="left:693px;width:320px"></div>
<div class="sp" style="left:1015px;width:322px">WIDOS02</div>
<div class="sp" style="left:1339px;width:321px">2178826/01_EP_28</div>
<div class="sp" style="left:1662px;width:13px;padding-left:1px">9</div>
<div class="sp" style="left:1677px;width:24px;padding-left:2px">GB</div>
<div class="sp" style="left:1704px;width:24px;padding-left:2px">GB</div>
</body></html>
